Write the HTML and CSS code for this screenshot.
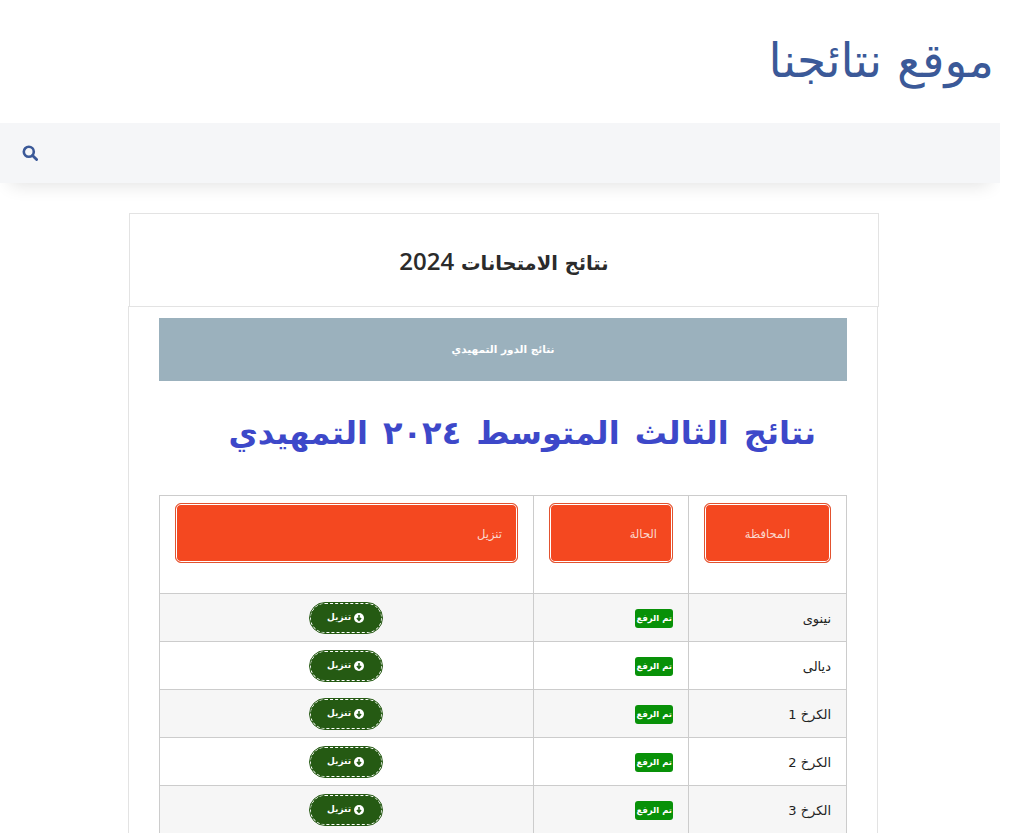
FILE: index.html
```html
<!DOCTYPE html>
<html lang="ar" dir="rtl">
<head>
<meta charset="utf-8">
<title>موقع نتائجنا</title>
<link rel="stylesheet" href="styles.css">
</head>
<body>
<div class="page">
  <header class="site-head">
    <a class="logo">موقع نتائجنا</a>
  </header>
  <nav class="nav">
    <svg class="search" viewBox="0 0 16 16" width="16" height="16"><circle cx="6.8" cy="6.8" r="5" fill="none" stroke="#3b5998" stroke-width="2.6"/><path d="M10.5 10.5L14.6 14.6" stroke="#3b5998" stroke-width="2.8" stroke-linecap="round"/></svg>
  </nav>
  <main class="main">
    <div class="card-head"><h1>نتائج الامتحانات <span class="year">2024</span></h1></div>
    <div class="card-body">
      <div class="banner">نتائج الدور التمهيدي</div>
      <h2 class="headline">نتائج الثالث المتوسط ٢٠٢٤ التمهيدي</h2>
      <table class="results">
        <thead>
          <tr>
            <th class="c1"><span class="hbtn center">المحافظة</span></th>
            <th class="c2"><span class="hbtn">الحالة</span></th>
            <th class="c3"><span class="hbtn">تنزيل</span></th>
          </tr>
        </thead>
        <tbody>
          <tr><td class="name">نينوى</td><td><span class="tag">تم الرفع</span></td><td class="dl"><a class="pill"><svg class="arrow" viewBox="0 0 12 12" width="10" height="10"><circle cx="6" cy="6" r="6" fill="#fff"/><path d="M6 2.5V8M3.5 6L6 8.8L8.5 6" fill="none" stroke="#255a13" stroke-width="1.8"/></svg>تنزيل</a></td></tr>
          <tr><td class="name">ديالى</td><td><span class="tag">تم الرفع</span></td><td class="dl"><a class="pill"><svg class="arrow" viewBox="0 0 12 12" width="10" height="10"><circle cx="6" cy="6" r="6" fill="#fff"/><path d="M6 2.5V8M3.5 6L6 8.8L8.5 6" fill="none" stroke="#255a13" stroke-width="1.8"/></svg>تنزيل</a></td></tr>
          <tr><td class="name">الكرخ 1</td><td><span class="tag">تم الرفع</span></td><td class="dl"><a class="pill"><svg class="arrow" viewBox="0 0 12 12" width="10" height="10"><circle cx="6" cy="6" r="6" fill="#fff"/><path d="M6 2.5V8M3.5 6L6 8.8L8.5 6" fill="none" stroke="#255a13" stroke-width="1.8"/></svg>تنزيل</a></td></tr>
          <tr><td class="name">الكرخ 2</td><td><span class="tag">تم الرفع</span></td><td class="dl"><a class="pill"><svg class="arrow" viewBox="0 0 12 12" width="10" height="10"><circle cx="6" cy="6" r="6" fill="#fff"/><path d="M6 2.5V8M3.5 6L6 8.8L8.5 6" fill="none" stroke="#255a13" stroke-width="1.8"/></svg>تنزيل</a></td></tr>
          <tr><td class="name">الكرخ 3</td><td><span class="tag">تم الرفع</span></td><td class="dl"><a class="pill"><svg class="arrow" viewBox="0 0 12 12" width="10" height="10"><circle cx="6" cy="6" r="6" fill="#fff"/><path d="M6 2.5V8M3.5 6L6 8.8L8.5 6" fill="none" stroke="#255a13" stroke-width="1.8"/></svg>تنزيل</a></td></tr>
        </tbody>
      </table>
    </div>
  </main>
</div>
</body>
</html>
```
FILE: styles.css
```css
html, body { margin: 0; padding: 0; background: #fff; overflow: hidden; }
body { font-family: "DejaVu Sans", sans-serif; color: #212529; height: 840px; }
.page { width: 1000px; height: 833px; overflow: hidden; margin-right: 18px; }
.site-head { height: 123px; box-sizing: border-box; padding: 29px 6px 0 0; }
.logo { font-size: 47px; line-height: 64px; color: #3b5998; display: block; }
.nav { height: 60px; background: #f5f6f8; box-shadow: 0 12px 18px -10px rgba(0,0,0,.12); display: flex; align-items: center; justify-content: flex-end; padding-left: 22px; box-sizing: border-box; }
.main { width: 750px; margin: 30px 121px 0 0; }
.card-head { height: 94px; box-sizing: border-box; border: 1px solid #e3e3e3; display: flex; align-items: center; justify-content: center; padding-top: 5px; }
.card-head h1 { margin: 0; font-size: 19.5px; font-weight: 700; line-height: 32px; color: #2b2b2b; }
.year { font-family: "Open Sans", sans-serif; font-size: 24px; font-weight: 600; }
.card-body { width: 750px; margin: -1px 1px 0 -1px; box-sizing: border-box; border: 1px solid #e3e3e3; border-bottom: 0; padding: 11px 30px 0; }
.banner { height: 63px; background: #9bb1bd; color: #fff; font: 700 10.5px/63px "DejaVu Sans", sans-serif; text-align: center; }
.headline { margin: 0; height: 114px; box-sizing: border-box; padding: 24px 31px 0 0; font: 700 32px/56px "DejaVu Sans", sans-serif; word-spacing: 4px; color: #3d48c9; text-align: right; white-space: nowrap; }
.results { width: 688px; border-collapse: collapse; table-layout: fixed; font: 13px/20px "DejaVu Sans", sans-serif; color: #222; }
.results th, .results td { border: 1px solid #ccc; padding: 0 15px; text-align: right; }
.results th { height: 98px; padding: 7px 15px 30px; vertical-align: top; font-weight: 400; box-sizing: border-box; }
.results td { height: 48px; box-sizing: border-box; }
.results td.name { padding-top: 2px; }
.results tbody tr:nth-child(odd) { background: #f6f6f6; }
.c1 { width: 158px; }
.c2 { width: 155px; }
.hbtn { display: block; height: 60px; box-sizing: border-box; background: #f44820; color: #fbd9cf; border: 1px solid #e2522f; border-radius: 6px; box-shadow: inset 0 0 0 1px #fff; padding: 0 15px; font-size: 11.5px; line-height: 60px; text-align: right; }
.hbtn.center { text-align: center; }
.tag { display: inline-block; background: #089108; color: #fff; border-radius: 3px; padding: 0 1px; height: 19px; font: 700 8.5px/19px "DejaVu Sans", sans-serif; }
.results td.dl { text-align: center; padding-right: 17px; }
.pill { display: inline-flex; align-items: center; justify-content: center; gap: 3px; width: 72px; height: 30px; box-sizing: border-box; background: #255a13; color: #fff; border-radius: 15px; border: 1px dashed #fff; outline: 1px solid #255a13; font: 700 9px/1 "DejaVu Sans", sans-serif; }
```
